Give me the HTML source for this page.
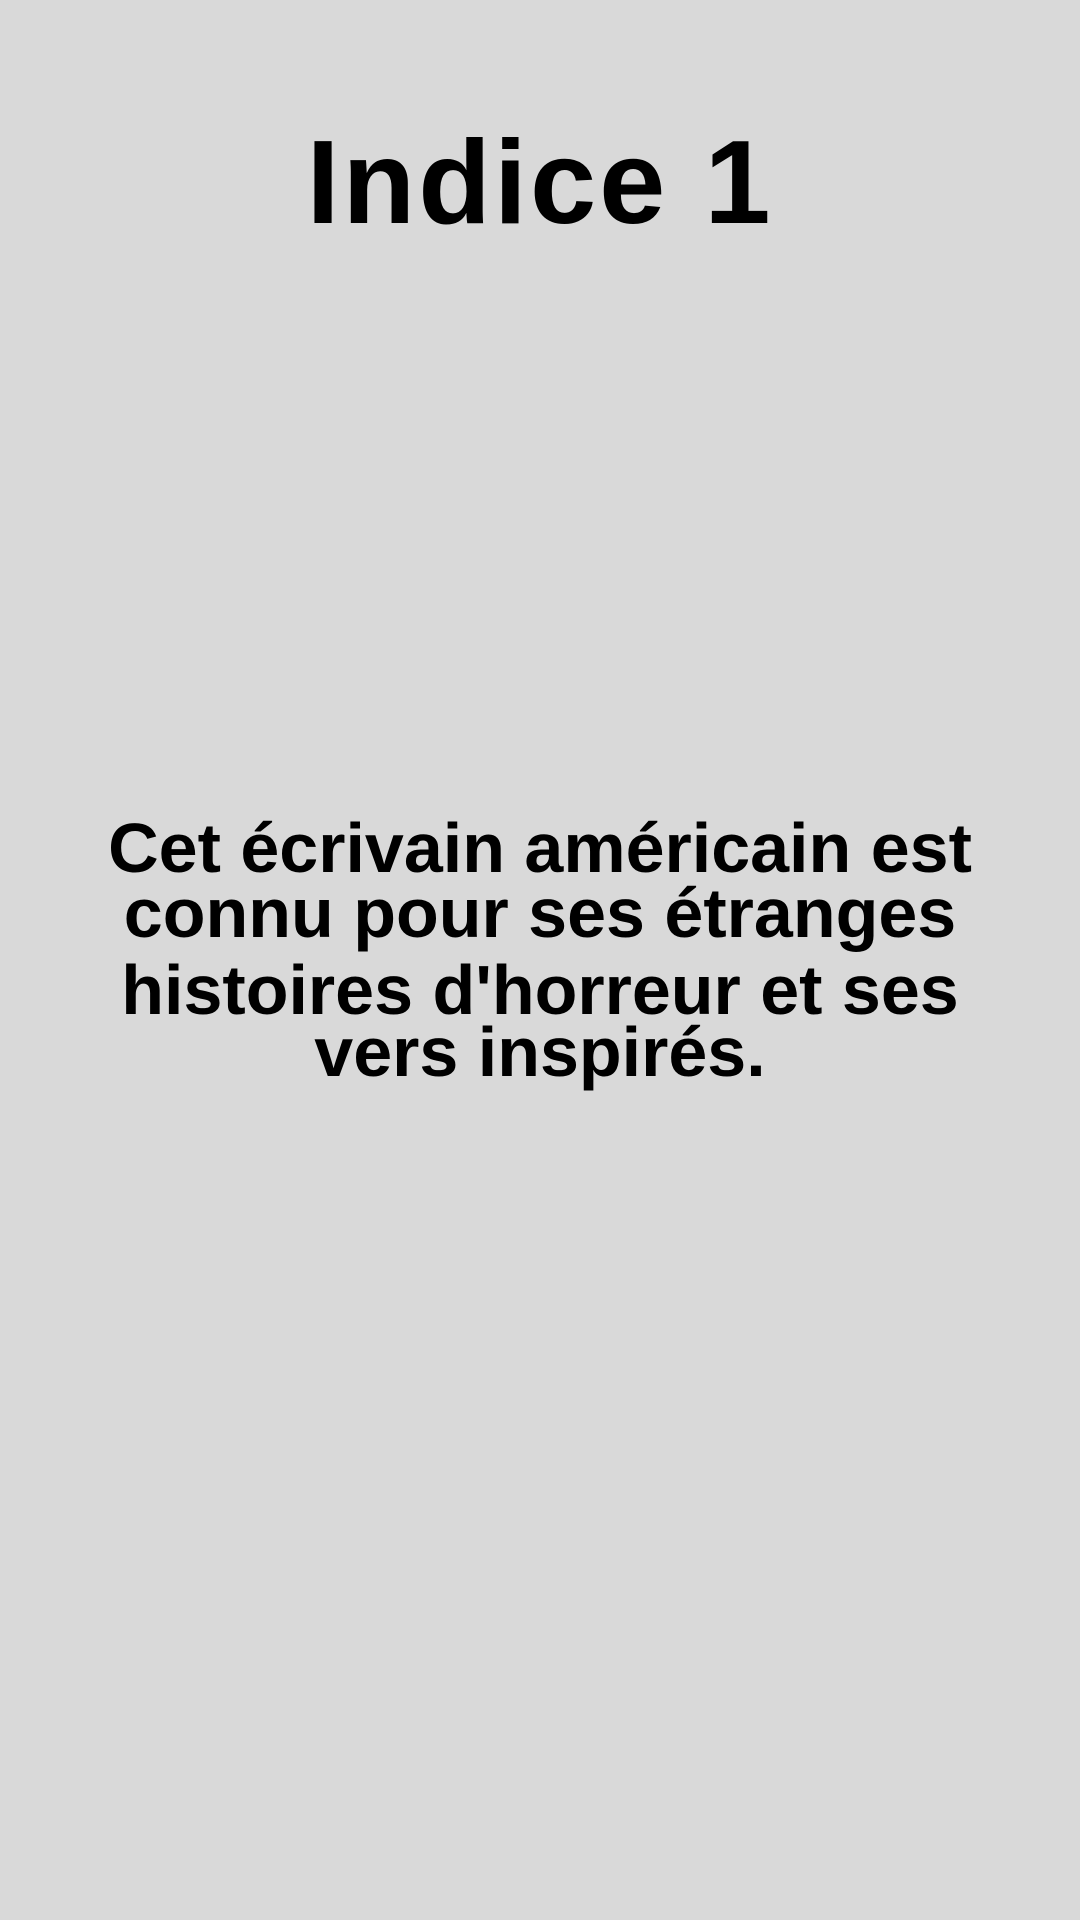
<!DOCTYPE html>
<html><head><meta charset="utf-8"><style>
html,body{margin:0;padding:0;}
body{width:1080px;height:1920px;background:#d9d9d9;position:relative;overflow:hidden;font-family:"Liberation Sans",sans-serif;color:#000;}
.t{position:absolute;left:0;width:1080px;text-align:center;font-weight:bold;white-space:nowrap;}
.title{font-size:119px;letter-spacing:3px;top:108px;line-height:150px;}
.l{font-size:70px;line-height:80px;letter-spacing:0px;}
</style></head><body>
<div class="t title">Indice 1</div>
<div class="t l" style="top:808px">Cet écrivain américain est</div>
<div class="t l" style="top:873px">connu pour ses étranges</div>
<div class="t l" style="top:950px">histoires d'horreur et ses</div>
<div class="t l" style="top:1012px">vers inspirés.</div>
</body></html>
